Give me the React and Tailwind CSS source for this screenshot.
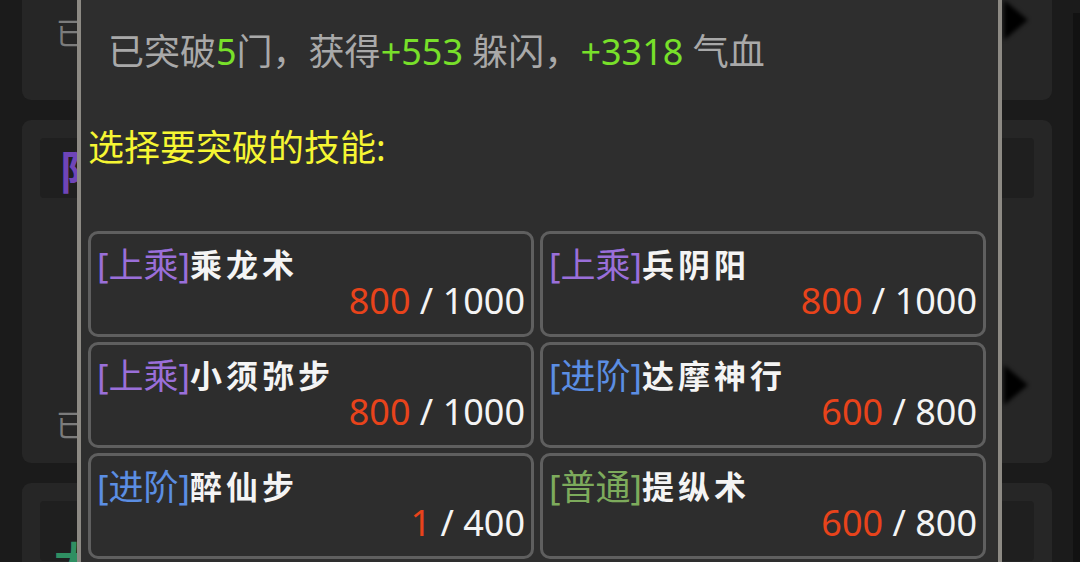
import React from 'react';

const tagColors = {
  上乘: 'text-[#9a6fd9]',
  进阶: 'text-[#5b8ee3]',
  普通: 'text-[#7dab5c]',
};

const skills = [
  { tier: '上乘', name: '乘龙术', cur: 800, max: 1000 },
  { tier: '上乘', name: '兵阴阳', cur: 800, max: 1000 },
  { tier: '上乘', name: '小须弥步', cur: 800, max: 1000 },
  { tier: '进阶', name: '达摩神行', cur: 600, max: 800 },
  { tier: '进阶', name: '醉仙步', cur: 1, max: 400 },
  { tier: '普通', name: '提纵术', cur: 600, max: 800 },
];

const font = { fontFamily: '"Noto Sans", Roboto, "Noto Sans CJK SC", sans-serif' };

function Arrow() {
  return (
    <svg className="shrink-0 blur-[2px]" width="30" height="44" viewBox="0 0 30 44">
      <polygon points="4,2 28,22 4,42" fill="#000" />
    </svg>
  );
}

function SkillCard({ skill }) {
  return (
    <div className="h-[106px] rounded-[10px] border-[3px] border-[#5f5f5f] bg-[#2d2d2d] pl-[6px] pr-[6px] pt-[13px]">
      <div className="flex items-center leading-[36px]">
        <span className={`text-[35px] ${tagColors[skill.tier]}`}>[{skill.tier}]</span>
        <span className="text-[32px] font-bold tracking-[4px] text-[#f4f4f4]">{skill.name}</span>
      </div>
      <div className="text-right text-[36px] leading-[36px] text-[#f4f4f4]">
        <span className="text-[#e8431b]">{skill.cur}</span> / {skill.max}
      </div>
    </div>
  );
}

export default function App() {
  return (
    <div className="relative h-[562px] w-[1080px] overflow-hidden bg-[#1b1b1b]" style={font}>
      {/* list behind the dialog */}
      <div className="-mt-[40px] flex flex-col gap-[20px] pl-[22px] pr-[28px]">
        <div className="flex h-[140px] items-start justify-between rounded-[9px] bg-[#262626] pl-[34px] pr-[22px] pt-[38px]">
          <span className="mt-[20px] text-[30px] leading-none text-[#7c7c7c]">已</span>
          <Arrow />
        </div>
        <div className="flex h-[343px] flex-col rounded-[9px] bg-[#262626] px-[18px] pt-[18px]">
          <div className="h-[60px] overflow-hidden rounded-[4px] bg-[#1f1f1f] pl-[20px] text-[46px] font-bold leading-[66px] text-[#6f45b8]">
            阳
          </div>
          <div className="mt-[165px] flex items-start justify-between pl-[16px] pr-[4px]">
            <span className="mt-[47px] text-[30px] leading-none text-[#7c7c7c]">已</span>
            <Arrow />
          </div>
        </div>
        <div className="h-[200px] rounded-[9px] bg-[#262626] px-[18px] pt-[18px]">
          <div className="h-[60px] rounded-[4px] bg-[#1f1f1f] pl-[14px] pt-[30px] text-[40px] font-bold leading-[60px] text-[#2f8f62]">
            大
          </div>
        </div>
      </div>
      <div className="absolute right-0 top-[13px] h-[560px] w-[7px] bg-[#121212]" />

      {/* breakthrough dialog */}
      <div className="absolute left-[77px] top-0 h-[562px] w-[925px] border-x-4 border-[#8d8a84] bg-[#2e2e2e]">
        <div className="mt-[32px] pl-[27px] text-[36px] leading-[40px] text-[#a9a9a9]">
          已突破<span className="text-[#78e02a]">5</span>门，获得<span className="text-[#78e02a]">+553</span> 躲闪，
          <span className="text-[#78e02a]">+3318</span> 气血
        </div>
        <div className="mt-[56px] pl-[7px] text-[36px] leading-[40px] text-[#f6f633]">选择要突破的技能:</div>
        <div className="mt-[63px] grid grid-cols-2 gap-x-[6px] gap-y-[5px] pl-[7px] pr-[12px]">
          {skills.map((s) => (
            <SkillCard key={s.name} skill={s} />
          ))}
        </div>
      </div>
    </div>
  );
}
